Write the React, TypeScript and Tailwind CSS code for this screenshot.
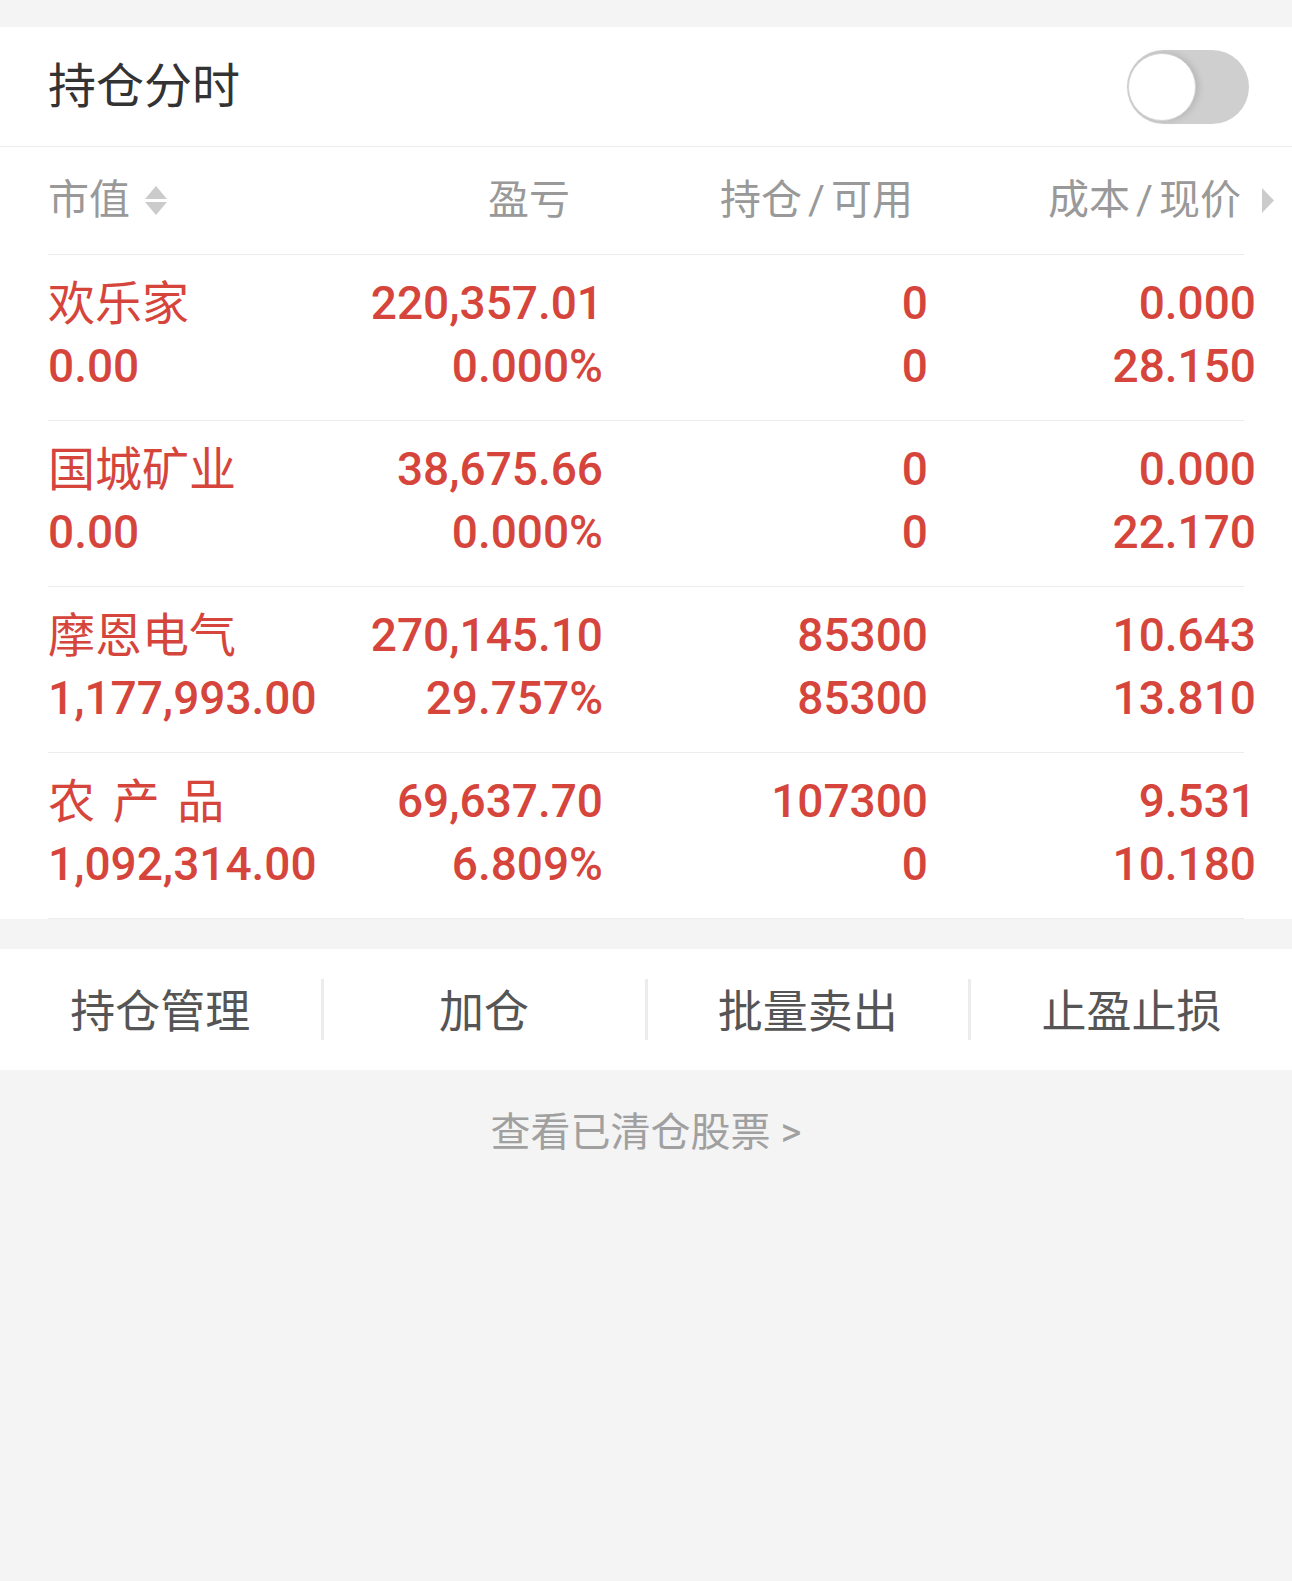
import React, { useState } from "react";

type Position = {
  name: string;
  value: string;
  pnl: string;
  pnlPct: string;
  hold: string;
  avail: string;
  cost: string;
  price: string;
};

const positions: Position[] = [
  { name: "欢乐家", value: "0.00", pnl: "220,357.01", pnlPct: "0.000%", hold: "0", avail: "0", cost: "0.000", price: "28.150" },
  { name: "国城矿业", value: "0.00", pnl: "38,675.66", pnlPct: "0.000%", hold: "0", avail: "0", cost: "0.000", price: "22.170" },
  { name: "摩恩电气", value: "1,177,993.00", pnl: "270,145.10", pnlPct: "29.757%", hold: "85300", avail: "85300", cost: "10.643", price: "13.810" },
  { name: "农 产 品", value: "1,092,314.00", pnl: "69,637.70", pnlPct: "6.809%", hold: "107300", avail: "0", cost: "9.531", price: "10.180" },
];

const actions = ["持仓管理", "加仓", "批量卖出", "止盈止损"];

const SortIcon = () => (
  <svg width="22" height="29" viewBox="0 0 22 29" className="ml-[15px]">
    <polygon points="11,0 22,13 0,13" fill="#cbcbcb" />
    <polygon points="0,16 22,16 11,29" fill="#cbcbcb" />
  </svg>
);

const SlashLabel = ({ a, b }: { a: string; b: string }) => (
  <span>
    {a}
    <span className="mx-[6px]">/</span>
    {b}
  </span>
);

const Toggle: React.FC = () => {
  const [on, setOn] = useState(false);
  return (
    <button
      onClick={() => setOn(!on)}
      className={`flex items-center w-[122px] h-[74px] rounded-full pl-[1px] ${on ? "bg-[#d6453c] justify-end pr-[3px]" : "bg-[#cfcfcf]"}`}
    >
      <span className="block w-[68px] h-[68px] rounded-full bg-white border border-[#d4d4d4] shadow-[3px_0_6px_rgba(0,0,0,0.12)]" />
    </button>
  );
};

const App: React.FC = () => {
  return (
    <div className="min-h-[1581px] bg-[#f4f4f4] font-['Roboto','Noto_Sans_CJK_SC',sans-serif]">
      <div className="h-[27px]" />

      {/* title bar */}
      <div className="bg-white h-[120px] flex items-center justify-between pl-[48px] pr-[43px] border-b border-[#ececec]">
        <span className="text-[48px] text-[#333]">持仓分时</span>
        <Toggle />
      </div>

      {/* holdings table */}
      <div className="bg-white">
        <div className="mx-[48px] border-b border-[#ececec]">
          <div className="grid grid-cols-[305px_250px_325px_328px] h-[107px] items-center text-[41px] text-[#999]">
            <div className="flex items-center">
              <span>市值</span>
              <SortIcon />
            </div>
            <div className="text-right pr-[33px]">盈亏</div>
            <div className="text-right pr-[15px]">
              <SlashLabel a="持仓" b="可用" />
            </div>
            <div className="flex items-center justify-end mr-[-18px]">
              <SlashLabel a="成本" b="现价" />
              <svg width="12" height="25" viewBox="0 0 12 25" className="ml-[21px]">
                <polygon points="0,0 12,12.5 0,25" fill="#cbcbcb" />
              </svg>
            </div>
          </div>
        </div>

        {positions.map((p) => (
          <div key={p.name} className="mx-[48px] border-b border-[#ececec]">
            <div className="grid grid-cols-[305px_250px_325px_328px] h-[165px] pt-[17px] text-[46px] leading-[63px] text-[#d6453c]">
              <div>
                <div className="text-[47px] [word-spacing:6px]">{p.name}</div>
                <div className="font-medium">{p.value}</div>
              </div>
              <div className="text-right font-medium">
                <div>{p.pnl}</div>
                <div>{p.pnlPct}</div>
              </div>
              <div className="text-right font-medium">
                <div>{p.hold}</div>
                <div>{p.avail}</div>
              </div>
              <div className="text-right font-medium">
                <div>{p.cost}</div>
                <div>{p.price}</div>
              </div>
            </div>
          </div>
        ))}
      </div>

      {/* action bar */}
      <div className="mt-[30px] bg-white h-[121px] flex items-center">
        {actions.map((a, i) => (
          <React.Fragment key={a}>
            {i > 0 && <div className="w-[3px] h-[61px] bg-[#ececec]" />}
            <div className="flex-1 text-center text-[45px] text-[#555] pt-[6px]">{a}</div>
          </React.Fragment>
        ))}
      </div>

      <div className="pt-[38px] text-center text-[40px] leading-[50px] text-[#a0a0a0]">
        查看已清仓股票 &gt;
      </div>
    </div>
  );
};

export default App;
